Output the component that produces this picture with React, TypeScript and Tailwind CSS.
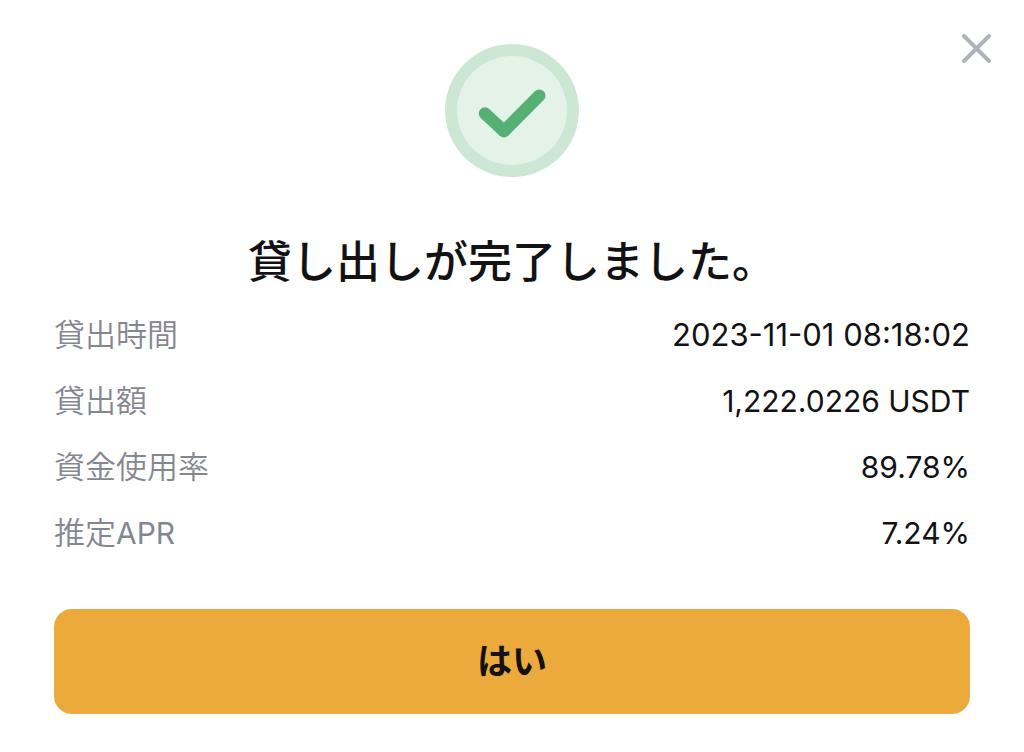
const rows = [
  { label: "貸出時間", value: "2023-11-01 08:18:02", valueSize: "text-[31px]" },
  { label: "貸出額", value: "1,222.0226 USDT", valueSize: "text-[30px]" },
  { label: "資金使用率", value: "89.78%", valueSize: "text-[30px]" },
  { label: "推定", latin: "APR", value: "7.24%", valueSize: "text-[30px]" },
];

function SuccessIcon() {
  return (
    <svg className="size-[134px]" viewBox="0 0 134 134" fill="none" aria-hidden="true">
      <ellipse cx="67" cy="66.5" rx="67" ry="66.5" fill="#cce8d5" />
      <ellipse cx="67" cy="66.5" rx="55" ry="54.5" fill="#e5f2e8" />
      <path d="M40 69.5L59 87.2L94.3 51.7" stroke="#55b073" strokeWidth="12.5" strokeLinecap="round" strokeLinejoin="round" />
    </svg>
  );
}

export default function App() {
  return (
    <main className="relative flex min-h-screen flex-col items-center bg-white px-[54px] pt-11 pb-[38px] font-['Inter','Noto_Sans_CJK_JP',sans-serif] text-[#121214]">
      <button type="button" aria-label="閉じる" className="absolute top-8 right-8 size-8">
        <svg viewBox="0 0 32 32" fill="none" stroke="#b0b3bb" strokeWidth="4" strokeLinecap="round">
          <path d="M4 4L29 29M29 4L4 29" />
        </svg>
      </button>
      <SuccessIcon />
      <h1 className="mt-[51px] text-[44px] leading-[66px] font-medium">貸し出しが完了しました。</h1>
      <dl className="mt-[7px] flex w-full flex-col">
        {rows.map((row) => (
          <div key={row.label} className="flex h-[66px] items-center justify-between">
            <dt className="text-[31px] font-[350] text-[#85878f]">
              {row.label}
              {row.latin && <span className="text-[30px] font-normal">{row.latin}</span>}
            </dt>
            <dd className={row.valueSize}>{row.value}</dd>
          </div>
        ))}
      </dl>
      <button type="button" className="mt-[43px] h-[105px] w-full rounded-[18px] bg-[#ecaa3c] text-[35px] font-bold">
        はい
      </button>
    </main>
  );
}
